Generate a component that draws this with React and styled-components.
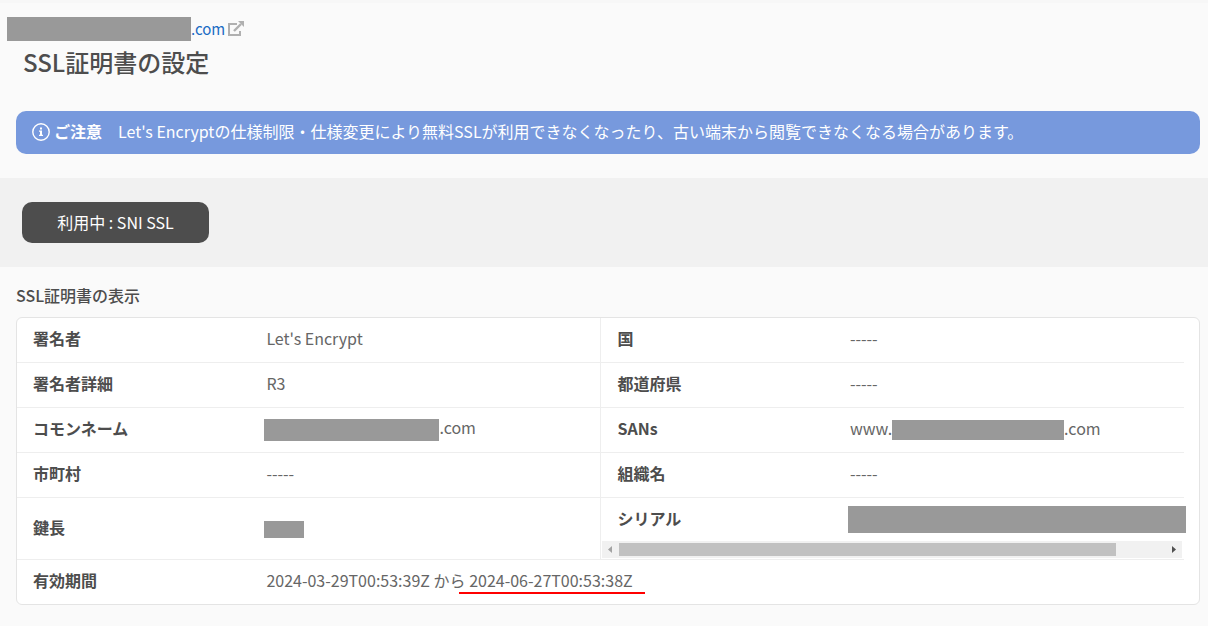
import React from 'react';
import styled, { createGlobalStyle } from 'styled-components';

const rows = [
  [{ label: '署名者', value: "Let's Encrypt" }, { label: '国', value: '-----' }],
  [{ label: '署名者詳細', value: 'R3' }, { label: '都道府県', value: '-----' }],
  [
    { label: 'コモンネーム', hidden: { width: 175, height: 22, pull: true }, suffix: '.com' },
    { label: 'SANs', value: 'www.', hidden: { width: 172, height: 20 }, suffix: '.com' },
  ],
  [{ label: '市町村', value: '-----' }, { label: '組織名', value: '-----' }],
];

const ExternalIcon = () => (
  <svg width="16" height="16" viewBox="0 0 16 16" fill="none" stroke="#b0b0b0" strokeWidth="2" aria-hidden="true">
    <path d="M9 3H1v11h11v-4" />
    <path d="M6 10l7-7" strokeWidth="2.4" />
    <path d="M10 0h6v6z" fill="#b0b0b0" stroke="none" />
  </svg>
);

const InfoIcon = () => (
  <svg width="18" height="18" viewBox="0 0 18 18" fill="none" aria-hidden="true">
    <circle cx="9" cy="9" r="8.2" stroke="#fff" strokeWidth="1.4" />
    <path d="M8 4.4h2v2H8zM7 7.6h3v4.2h1V13H7v-1.2h1V8.8H7z" fill="#fff" />
  </svg>
);

const Scrollbar = () => (
  <ScrollTrack aria-hidden="true">
    <ScrollArrow $color="#a3a3a3"><path d="M10 5v7L6 8.5z" /></ScrollArrow>
    <ScrollRail><ScrollThumb /></ScrollRail>
    <ScrollArrow $color="#505050"><path d="M7 5v7l4-3.5z" /></ScrollArrow>
  </ScrollTrack>
);

const Field = ({ field, divided }) => (
  <>
    <Label scope="row" $divided={divided}>{field.label}</Label>
    <Value>
      {field.value}
      {field.hidden && (
        <Redacted $width={field.hidden.width} $height={field.hidden.height} $pull={field.hidden.pull} />
      )}
      {field.suffix}
    </Value>
  </>
);

const App = () => (
  <>
    <GlobalStyle />
    <Page>
      <Header>
        <DomainLink href="#">
          <Redacted $width={184} $height={24} />
          .com
          <ExternalIcon />
        </DomainLink>
        <Title>SSL証明書の設定</Title>
      </Header>

      <Notice>
        <InfoIcon />
        <strong>ご注意</strong>
        <p>Let's Encryptの仕様制限・仕様変更により無料SSLが利用できなくなったり、古い端末から閲覧できなくなる場合があります。</p>
      </Notice>

      <StatusBar>
        <StatusButton type="button">利用中 : SNI SSL</StatusButton>
      </StatusBar>

      <Section>
        <SectionTitle id="cert-title">SSL証明書の表示</SectionTitle>
        <Card>
          <Table aria-labelledby="cert-title">
            <tbody>
              {rows.map(([left, right]) => (
                <tr key={left.label}>
                  <Field field={left} />
                  <Field field={right} divided />
                </tr>
              ))}
              <tr>
                <Label scope="row">鍵長</Label>
                <Value><Redacted $width={40} $height={17} $pull /></Value>
                <SerialCell colSpan={2}>
                  <SerialRow>
                    <SerialLabel>シリアル</SerialLabel>
                    <SerialValue />
                  </SerialRow>
                  <Scrollbar />
                </SerialCell>
              </tr>
              <tr>
                <Label scope="row">有効期間</Label>
                <Value colSpan={3}>
                  2024-03-29T00:53:39Z から <Expiry>2024-06-27T00:53:38Z</Expiry>
                </Value>
              </tr>
            </tbody>
          </Table>
        </Card>
      </Section>
    </Page>
  </>
);

export default App;

const GlobalStyle = createGlobalStyle`
  * {
    box-sizing: border-box;
  }

  body {
    margin: 0;
    background: #fafafa;
    color: #4d4d4d;
    font-family: "Noto Sans CJK JP", sans-serif;
    font-size: 16px;
    line-height: 24px;
  }
`;

const Page = styled.main`
  border-top: 3px solid #f7f7f7;
  padding-bottom: 20px;
`;

const Header = styled.header`
  padding: 14px 7px 0;
`;

const Redacted = styled.span`
  display: inline-block;
  vertical-align: middle;
  width: ${({ $width }) => $width}px;
  height: ${({ $height }) => $height}px;
  margin-left: ${({ $pull }) => ($pull ? '-2px' : 0)};
  background: #999;
`;

const DomainLink = styled.a`
  display: flex;
  align-items: center;
  width: fit-content;
  color: #1a6cc4;
  font-size: 15px;
  text-decoration: none;

  svg {
    margin-left: 3px;
  }
`;

const Title = styled.h1`
  margin: 4px 16px 0;
  font-size: 24px;
  font-weight: 500;
  line-height: 34px;
`;

const Notice = styled.div`
  display: flex;
  align-items: center;
  margin: 32px 8px 24px 16px;
  padding: 8px 16px 11px;
  border-radius: 10px;
  background: #7799dd;
  color: #fff;

  svg {
    flex: none;
    margin: 2px 4px 0 0;
  }

  strong {
    flex: none;
    margin-right: 16px;
  }

  p {
    margin: 0;
  }
`;

const StatusBar = styled.div`
  padding: 24px 22px;
  background: #f1f1f1;
`;

const StatusButton = styled.button`
  display: block;
  min-width: 187px;
  padding: 8px 32px 9px;
  border: 0;
  border-radius: 10px;
  background: #4d4d4d;
  color: #fff;
  font: inherit;
`;

const Section = styled.section`
  padding: 16px 8px 0 16px;
`;

const SectionTitle = styled.h2`
  margin: 0 0 10px;
  font-size: 16px;
  font-weight: 500;
  line-height: 24px;
`;

const Card = styled.div`
  padding-right: 15px;
  border: 1px solid #e4e4e4;
  border-radius: 6px;
  background: #fff;
`;

const Table = styled.table`
  width: 100%;
  table-layout: fixed;
  border-collapse: separate;
  border-spacing: 0;

  tr + tr > * {
    height: 45px;
    border-top: 1px solid #eee;
  }
`;

const Label = styled.th`
  width: 20%;
  height: 44px;
  padding: 6px 16px 10px;
  border-left: ${({ $divided }) => ($divided ? '1px solid #eee' : 0)};
  font-weight: 700;
  text-align: left;
`;

const Value = styled.td`
  width: 30%;
  padding: 6px 16px 10px;
  color: #666;
  white-space: nowrap;
`;

const SerialCell = styled.td`
  padding: 0 2px 0 1px;
  border-left: 1px solid #eee;
`;

const SerialRow = styled.div`
  display: flex;
  align-items: center;
  height: 43px;
  margin-right: -4px;
`;

const SerialLabel = styled.span`
  width: 42%;
  padding: 0 0 4px 15px;
  font-weight: 700;
`;

const SerialValue = styled.span`
  flex: 1;
  height: 27px;
  background: #999;
`;

const ScrollTrack = styled.div`
  display: flex;
  height: 17px;
  margin-bottom: 1px;
  background: #f1f1f1;
`;

const ScrollArrow = styled.svg.attrs({ width: 17, height: 17, viewBox: '0 0 17 17' })`
  flex: none;
  fill: ${({ $color }) => $color};
`;

const ScrollRail = styled.div`
  flex: 1;
  padding: 2px 0;
`;

const ScrollThumb = styled.div`
  width: 91%;
  height: 13px;
  background: #c1c1c1;
`;

const Expiry = styled.span`
  position: relative;

  &::after {
    content: '';
    position: absolute;
    right: -12px;
    bottom: -2px;
    left: -10px;
    height: 2px;
    background: #f00;
  }
`;
